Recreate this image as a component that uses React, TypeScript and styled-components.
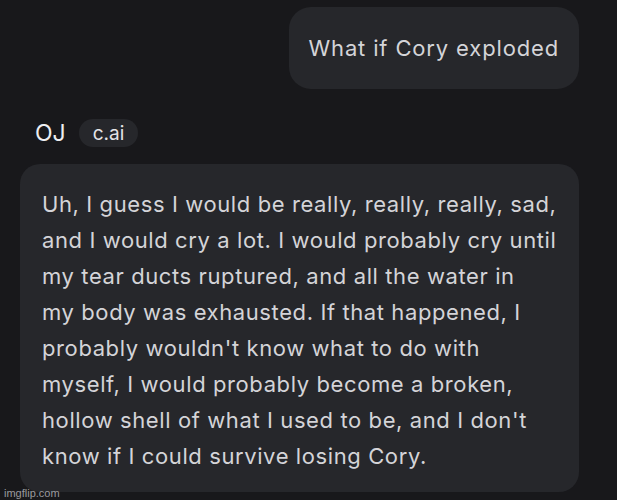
import React from 'react';
import styled, { createGlobalStyle } from 'styled-components';

const GlobalStyle = createGlobalStyle`
  html, body {
    margin: 0;
    padding: 0;
    background-color: #18181b;
  }
  * {
    box-sizing: border-box;
  }
`;

const Page = styled.div`
  position: relative;
  width: 617px;
  height: 500px;
  overflow: hidden;
  background-color: #18181b;
  font-family: Inter, 'Noto Sans', sans-serif;
  color: #d6d6da;
`;

const Chat = styled.div`
  display: flex;
  flex-direction: column;
  width: 579px;
  padding-top: 7px;
`;

const UserRow = styled.div`
  display: flex;
  justify-content: flex-end;
`;

const Bubble = styled.div<{ $user?: boolean }>`
  background-color: #26272b;
  border-radius: ${(p) => (p.$user ? '22px' : '20px')};
  font-size: 22px;
  line-height: 36px;
  letter-spacing: ${(p) => (p.$user ? '0.85px' : '0.6px')};
  white-space: nowrap;
  color: #d4d4d8;
  padding: ${(p) => (p.$user ? '23px 20px 23px 20px' : '22px 18px 18px 22px')};
`;

const BotHeader = styled.div`
  display: flex;
  align-items: center;
  gap: 13px;
  padding: 30px 0 0 35px;
  height: 58px;
`;

const BotName = styled.span`
  font-size: 23px;
  color: #ededf0;
`;

const Badge = styled.span`
  display: inline-flex;
  align-items: center;
  height: 28px;
  padding: 0 14px;
  border-radius: 14px;
  background-color: #26272b;
  font-size: 19px;
  color: #e4e4e7;
`;

const BotBody = styled.div`
  padding: 17px 0 0 20px;
`;

const Watermark = styled.span`
  position: absolute;
  left: 4px;
  bottom: 1px;
  font-family: 'Liberation Sans', Arial, sans-serif;
  font-size: 11px;
  color: #9a9a9e;
`;

const reply = [
  'Uh, I guess I would be really, really, really, sad,',
  'and I would cry a lot. I would probably cry until',
  'my tear ducts ruptured, and all the water in',
  'my body was exhausted. If that happened, I',
  "probably wouldn't know what to do with",
  'myself, I would probably become a broken,',
  "hollow shell of what I used to be, and I don't",
  'know if I could survive losing Cory.',
];

const App = () => {
  return (
    <Page>
      <GlobalStyle />
      <Chat>
        <UserRow>
          <Bubble $user>What if Cory exploded</Bubble>
        </UserRow>
        <BotHeader>
          <BotName>OJ</BotName>
          <Badge>c.ai</Badge>
        </BotHeader>
        <BotBody>
          <Bubble>
            {reply.map((line, i) => (
              <React.Fragment key={i}>
                {line}
                {i < reply.length - 1 && <br />}
              </React.Fragment>
            ))}
          </Bubble>
        </BotBody>
      </Chat>
      <Watermark>imgflip.com</Watermark>
    </Page>
  );
};

export default App;
